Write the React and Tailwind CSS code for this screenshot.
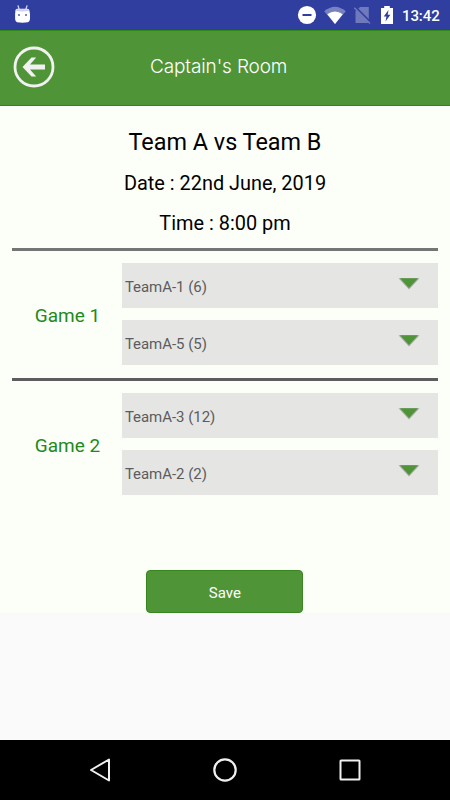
import React from 'react';

const games = [
    { name: 'Game 1', players: ['TeamA-1 (6)', 'TeamA-5 (5)'], line: 'bg-[#757575]' },
    { name: 'Game 2', players: ['TeamA-3 (12)', 'TeamA-2 (2)'], line: 'bg-[#5e5c5e]' }
];

const StatusBar = () => (
    <div className="flex h-[30px] items-center bg-[#303f9f] pl-[14px] pr-[10px] text-white">
        <svg width="18" height="20" viewBox="0 0 18 20" className="mb-[2px]">
            <path d="M4.1 1.8 5 5M13 1.8 12 5" stroke="#cdd1e9" strokeWidth="1.3" strokeLinecap="round" />
            <path d="M1.5 6Q2 4.8 3.5 4.8H13Q14.8 4.8 15.3 6L16 10V15Q15.7 18.1 14 18.3Q8.5 19.1 3 18.3Q1.4 18.1 1.1 15V10Z" fill="#fff" />
            <path d="M2.3 5.2H14.5L15.2 6.8Q8.5 8 1.7 6.8Z" fill="#cdd1e9" />
            <path d="M4 10h2v2H4zM11 10h2v2h-2z" fill="#7d86c4" />
        </svg>
        <div className="ml-auto flex items-center">
            <svg width="20" height="20" viewBox="0 0 20 20">
                <circle cx="10" cy="10" r="9.1" fill="#fff" />
                <path d="M5.5 10h9" stroke="#303f9f" strokeWidth="2" />
            </svg>
            <svg width="24" height="20" viewBox="0 0 24 20" className="ml-[6px]">
                <path d="M1.2 6.2Q12-2.8 22.8 6.2L12 19Z" fill="#7882c0" />
                <path d="M4.3 9.3Q12 3.8 19.7 9.3L12 19Z" fill="#fff" />
            </svg>
            <svg width="18" height="20" viewBox="0 0 18 20" className="ml-[6px]">
                <path d="M7 2H15.8V18H2.5V6.4Z" fill="#6f79bc" />
                <path d="M3 2.7 18 17.7" stroke="#303f9f" strokeWidth="2" />
                <path d="M1.3 2.7 17 18.5" stroke="#6f79bc" strokeWidth="1.5" />
            </svg>
            <svg width="14" height="20" viewBox="0 0 14 20" className="ml-[9px]">
                <path d="M4.2 1h5.6v2H13v16H1V3h3.2z" fill="#fff" />
                <path d="m8.5 5-4.8 6.6h2.7L5.5 16.5 10.4 9.8H7.7z" fill="#303f9f" />
            </svg>
            <span className="ml-[8px] mt-[2px] w-[38px] whitespace-nowrap text-[15px] font-medium leading-5 tracking-[-0.1px]">13:42</span>
        </div>
    </div>
);

const Header = () => (
    <div className="flex h-[76px] items-center border-b border-t border-[#2f8616] bg-[#509438] pl-[13px]">
        <svg width="42" height="42" viewBox="0 0 42 42" className="mb-[3px]" fill="#f1f1f1">
            <circle cx="21" cy="21" r="19" fill="none" stroke="#f1f1f1" strokeWidth="2.8" />
            <path d="M9.5 21 18.5 11.5H23.2L17 18.6H32V23.4H17L23.2 30.5H18.5Z" />
        </svg>
        <h1 className="mb-[3px] ml-[95px] whitespace-nowrap font-[Inter,sans-serif] text-[19px] font-[350] leading-6 tracking-[-0.13px] text-white">
            Captain's Room
        </h1>
    </div>
);

const PlayerSelect = ({ value }) => (
    <button className="flex h-[45px] w-full items-center justify-between bg-[#e5e5e4] pl-[2.5px] pr-[17.5px]">
        <span className="pt-[3px] text-[15px] tracking-[-0.04px] text-[#5c5c5c]">{value}</span>
        <svg width="22" height="12" viewBox="0 0 22 12" className="mb-[3px]">
            <path d="M.5 .3H21.5L11 11.5Z" fill="#a5a9a3" />
            <path d="M2 .3H20L11 9.9Z" fill="#509438" />
        </svg>
    </button>
);

const GameRow = ({ name, players, line }) => (
    <div className="h-[130px]">
        <div className={`h-[2.5px] ${line}`} />
        <div className="flex pt-[12.5px]">
            <div className="flex h-[102px] w-[110px] items-center justify-center pt-[4px] text-[19px] text-[#23891a]">
                {name}
            </div>
            <div className="flex flex-1 flex-col gap-3">
                {players.map((player) => (
                    <PlayerSelect key={player} value={player} />
                ))}
            </div>
        </div>
    </div>
);

const NavBar = () => (
    <div className="flex h-[60px] items-center justify-between bg-black px-[88px]">
        <svg width="24" height="26" viewBox="0 0 24 26" fill="none" stroke="#f0f0f0" strokeWidth="2">
            <path d="M3 13 21 2.5V23.5Z" strokeLinejoin="round" />
        </svg>
        <svg width="26" height="26" viewBox="0 0 26 26" fill="none" stroke="#f0f0f0" strokeWidth="2.2">
            <circle cx="13" cy="13" r="10.7" />
        </svg>
        <svg width="24" height="24" viewBox="0 0 24 24" fill="none" stroke="#f0f0f0" strokeWidth="2">
            <rect x="2.5" y="2.5" width="19" height="19" rx=".6" />
        </svg>
    </div>
);

const App = () => (
    <div className="flex h-[800px] w-[450px] flex-col bg-[#fafafa] font-[Roboto,sans-serif]">
        <StatusBar />
        <Header />
        <main className="flex h-[507px] flex-col bg-[#fcfff8]">
            <div className="flex h-[142.3px] flex-col items-center pt-[20px] text-black">
                <h2 className="text-[23.4px] leading-8">Team A vs Team B</h2>
                <p className="mt-[12px] text-[19.9px] leading-7">Date : 22nd June, 2019</p>
                <p className="mt-[12px] text-[19.9px] leading-7">Time : 8:00 pm</p>
            </div>
            <div className="pl-[12.4px] pr-[12.4px]">
                {games.map((game) => (
                    <GameRow key={game.name} {...game} />
                ))}
            </div>
            <button className="ml-[146.4px] mt-auto h-[43px] w-[157px] rounded-[4px] border border-[#36881e] bg-[#509438] pt-[3px] text-[15px] text-white">
                Save
            </button>
        </main>
        <div className="flex-1" />
        <NavBar />
    </div>
);

export default App;
